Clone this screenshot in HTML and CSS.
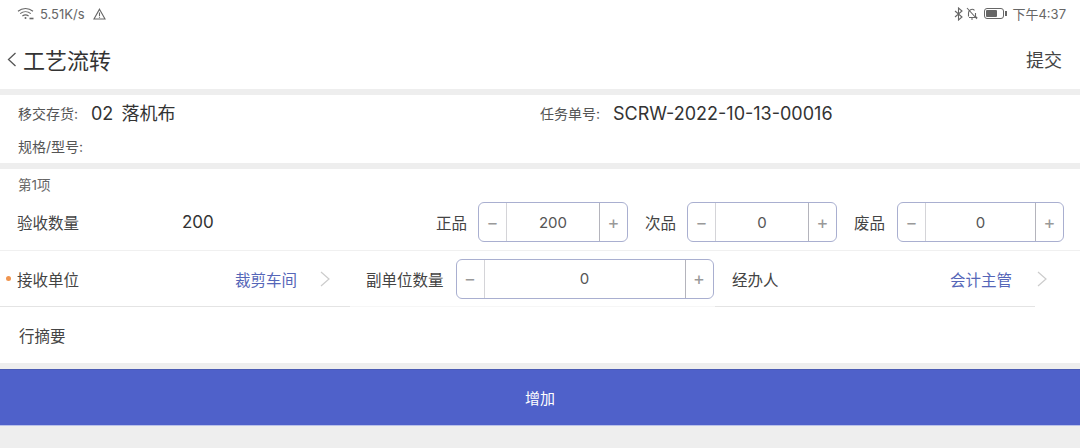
FILE: index.html
```html
<!DOCTYPE html>
<html lang="zh-CN">
<head>
    <meta charset="UTF-8">
    <meta name="viewport" content="width=device-width, initial-scale=1.0">
    <title>工艺流转</title>
    <link rel="stylesheet" href="styles.css">
</head>
<body>
    <!-- Status bar -->
    <div class="status-bar">
        <div class="status-left">
            <svg class="wifi-icon" width="17" height="13" viewBox="0 0 17 13" fill="none" stroke="#666" stroke-width="1.1">
                <path d="M1 4.2C5.4 .6 11.6 .6 16 4.2"/>
                <path d="M3.2 6.6C6.3 4.2 10.7 4.2 13.8 6.6"/>
                <path d="M5.4 9C7.2 7.7 9.8 7.7 11.6 9"/>
                <circle cx="8.5" cy="11" r="1" fill="#666" stroke="none"/>
                <path d="M12.5 11.5h4" stroke-width="1.6"/>
            </svg>
            <span class="speed">5.51K/s</span>
            <svg width="13" height="12" viewBox="0 0 13 12" fill="none" stroke="#666" stroke-width="1.1">
                <path d="M6.5 1.2L12 11H1z"/>
                <path d="M6.5 4.5v3.4M6.5 8.8v1"/>
            </svg>
        </div>
        <div class="status-right">
            <svg class="bt-icon" width="9" height="14" viewBox="0 0 9 14" fill="none" stroke="#666" stroke-width="1.1">
                <path d="M1 4l7 6-3.5 3V1L8 4 1 10"/>
            </svg>
            <svg class="bell-icon" width="12" height="13" viewBox="0 0 12 13" fill="none" stroke="#666" stroke-width="1.1">
                <path d="M2.5 9.5V6a3.5 3.5 0 0 1 6-2.6M9.5 6v3.5l1 1H3M5 12h2M1 1l10 11"/>
            </svg>
            <span class="battery"><span class="battery-fill"></span></span>
            <span class="battery-tip"></span>
            <span class="clock">下午4:37</span>
        </div>
    </div>

    <!-- Title bar -->
    <div class="nav-bar">
        <div class="nav-title">
            <svg width="9" height="15" viewBox="0 0 9 15" fill="none" stroke="#555" stroke-width="1.3">
                <path d="M8.5 1L1.5 7.5l7 6.5"/>
            </svg>
            <h1>工艺流转</h1>
        </div>
        <span class="nav-action">提交</span>
    </div>

    <!-- Task info -->
    <div class="info-box">
        <div class="info-row">
            <div class="info-item info-first">
                <span class="info-label">移交存货:</span>
                <span class="info-value">02&nbsp;&nbsp;落机布</span>
            </div>
            <div class="info-item">
                <span class="info-label">任务单号:</span>
                <span class="info-value">SCRW-2022-10-13-00016</span>
            </div>
        </div>
        <div class="info-row">
            <span class="info-label">规格/型号:</span>
        </div>
    </div>

    <!-- Item form -->
    <div class="item-box">
        <div class="item-title">第1项</div>

        <div class="form-row row-count">
            <span class="count-label">验收数量</span>
            <span class="count-value">200</span>
            <span class="stepper-label label-good">正品</span>
            <div class="stepper stepper-small">
                <span class="step-btn">−</span>
                <span class="step-num">200</span>
                <span class="step-btn">+</span>
            </div>
            <span class="stepper-label label-next">次品</span>
            <div class="stepper stepper-small">
                <span class="step-btn">−</span>
                <span class="step-num">0</span>
                <span class="step-btn">+</span>
            </div>
            <span class="stepper-label label-next">废品</span>
            <div class="stepper stepper-wide">
                <span class="step-btn">−</span>
                <span class="step-num">0</span>
                <span class="step-btn">+</span>
            </div>
        </div>

        <div class="form-row row-select">
            <div class="select-cell cell-unit">
                <span class="required-dot"></span>
                <span class="select-label">接收单位</span>
                <span class="select-value">裁剪车间</span>
                <svg class="chevron" width="11" height="16" viewBox="0 0 11 16" fill="none" stroke="#ccc" stroke-width="1.2">
                    <path d="M1 1l8 7-8 7"/>
                </svg>
            </div>
            <div class="select-cell cell-sub">
                <span class="stepper-label">副单位数量</span>
                <div class="stepper stepper-long">
                    <span class="step-btn">−</span>
                    <span class="step-num">0</span>
                    <span class="step-btn">+</span>
                </div>
            </div>
            <div class="select-cell cell-person">
                <span class="select-label">经办人</span>
                <span class="select-value">会计主管</span>
                <svg class="chevron" width="11" height="16" viewBox="0 0 11 16" fill="none" stroke="#ccc" stroke-width="1.2">
                    <path d="M1 1l8 7-8 7"/>
                </svg>
            </div>
        </div>

        <div class="remark-row">行摘要</div>
    </div>

    <button class="add-btn" type="button">增加</button>
</body>
</html>
```

FILE: styles.css
```css
body {
    font-family: Inter, "Noto Sans CJK SC", sans-serif;
    margin: 0;
    padding: 0;
    width: 1080px;
    height: 448px;
    overflow: hidden;
    background-color: #eeeeee;
    color: #444;
}

/* Status bar */
.status-bar {
    height: 29px;
    display: flex;
    justify-content: space-between;
    align-items: center;
    padding: 0 14px 2px 17px;
    box-sizing: border-box;
    background-color: #fff;
    color: #666;
    font-size: 13px;
}

.status-left,
.status-right {
    display: flex;
    align-items: center;
}

.speed {
    margin: 0 8px 0 6px;
}

.bt-icon {
    margin-right: 3px;
}

.bell-icon {
    margin-right: 6px;
}

.battery {
    width: 16px;
    height: 7px;
    border: 1px solid #666;
    border-radius: 3px;
    padding: 1px;
    display: flex;
}

.battery-fill {
    width: 11px;
    background-color: #666;
    border-radius: 1px;
}

.battery-tip {
    width: 2px;
    height: 5px;
    margin: 0 5px 0 1px;
    background-color: #666;
}

/* Title bar */
.nav-bar {
    height: 60px;
    display: flex;
    justify-content: space-between;
    align-items: center;
    padding: 0 18px 0 7px;
    background-color: #fff;
}

.nav-title {
    display: flex;
    align-items: center;
}

.nav-title h1 {
    margin: 0 0 0 7px;
    font-size: 22px;
    font-weight: 400;
    color: #333;
}

.nav-action {
    font-size: 18px;
    color: #444;
}

/* Task info */
.info-box {
    margin-top: 6px;
    height: 68px;
    padding: 2px 0 0 18px;
    box-sizing: border-box;
    background-color: #fff;
}

.info-row {
    height: 33px;
    line-height: 34px;
    display: flex;
    align-items: center;
}

.info-item {
    display: flex;
    align-items: center;
}

.info-first {
    width: 522px;
}

.info-label {
    width: 73px;
    font-size: 14px;
    color: #555;
    white-space: nowrap;
}

.info-value {
    font-size: 18px;
    word-spacing: -1px;
    color: #333;
}

/* Item form */
.item-box {
    margin-top: 6px;
    height: 194px;
    background-color: #fff;
}

.item-title {
    height: 33px;
    line-height: 32px;
    padding-left: 18px;
    font-size: 13.5px;
    color: #666;
}

.form-row {
    display: flex;
    align-items: center;
}

.row-count {
    height: 49px;
    padding: 0 0 8px 17px;
    box-sizing: border-box;
    border-bottom: 1px solid #f0f0f0;
    font-size: 15.5px;
}

.count-label {
    width: 165px;
}

.count-value {
    width: 254px;
    font-size: 17px;
    color: #333;
}

.stepper-label {
    font-size: 15.5px;
    white-space: nowrap;
}

.label-next {
    margin-left: 17px;
}

.stepper {
    height: 38px;
    margin-left: 11px;
    display: flex;
    border: 1px solid #a9afd0;
    border-radius: 6px;
    color: #888;
}

.stepper-small {
    width: 148px;
}

.stepper-wide {
    width: 165px;
    margin-left: 12px;
}

.stepper-long {
    width: 256px;
    margin-left: 12px;
}

.step-btn {
    width: 27px;
    flex-shrink: 0;
    display: flex;
    justify-content: center;
    align-items: center;
    font-size: 18px;
    color: #999;
}

.step-num {
    flex: 1;
    display: flex;
    justify-content: center;
    align-items: center;
    font-size: 15px;
    color: #555;
    border-left: 1px solid #d4d4d8;
    border-right: 1px solid #b4b4bc;
}

.row-select {
    height: 56px;
}

.select-cell {
    height: 56px;
    display: flex;
    align-items: center;
    font-size: 15.5px;
    box-sizing: border-box;
}

.cell-unit {
    width: 350px;
    padding-left: 6px;
    border-bottom: 1px solid #e4e4e4;
}

.cell-sub {
    width: 365px;
    padding-left: 16px;
    border-bottom: 1px solid #f6f6f6;
}

.cell-person {
    width: 320px;
    padding-left: 17px;
    border-bottom: 1px solid #e4e4e4;
}

.required-dot {
    width: 5px;
    height: 5px;
    margin-right: 6px;
    border-radius: 50%;
    background-color: #f0954f;
}

.select-label {
    width: 218px;
    flex-shrink: 0;
}

.select-value {
    width: 64px;
    flex-shrink: 0;
    white-space: nowrap;
    color: #5566b8;
}

.chevron {
    flex-shrink: 0;
    margin-left: 21px;
}

.cell-person .chevron {
    margin-left: 23px;
}

.remark-row {
    padding-left: 19px;
    height: 56px;
    line-height: 60px;
    font-size: 15.5px;
}

/* Add button */
.add-btn {
    display: block;
    width: 100%;
    height: 57px;
    margin-top: 6px;
    padding: 0;
    border: 0;
    border-top: 1px solid #4a5bb4;
    border-bottom: 1px solid #b9c1ea;
    font-family: inherit;
    font-size: 15px;
    color: #fff;
    background-color: #4f61ca;
}
```
